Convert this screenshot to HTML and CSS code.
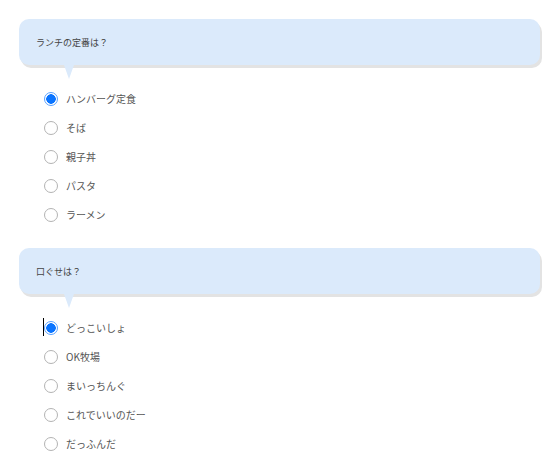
FILE: index.html
```html
<!DOCTYPE html>
<html lang="ja">
<head>
    <meta charset="UTF-8">
    <meta name="viewport" content="width=device-width, initial-scale=1.0">
    <title>アンケート</title>
    <link rel="stylesheet" href="styles.css">
</head>
<body>
    <form class="survey">
        <div class="question">
            <div class="bubble">ランチの定番は？</div>
            <div class="options">
                <label class="option"><input type="radio" name="lunch" value="hamburg" checked><span>ハンバーグ定食</span></label>
                <label class="option"><input type="radio" name="lunch" value="soba"><span>そば</span></label>
                <label class="option"><input type="radio" name="lunch" value="oyakodon"><span>親子丼</span></label>
                <label class="option"><input type="radio" name="lunch" value="pasta"><span>パスタ</span></label>
                <label class="option"><input type="radio" name="lunch" value="ramen"><span>ラーメン</span></label>
            </div>
        </div>
        <div class="question">
            <div class="bubble">口ぐせは？</div>
            <div class="options">
                <label class="option caret"><input type="radio" name="kuchiguse" value="1" checked><span>どっこいしょ</span></label>
                <label class="option"><input type="radio" name="kuchiguse" value="2"><span>OK牧場</span></label>
                <label class="option"><input type="radio" name="kuchiguse" value="3"><span>まいっちんぐ</span></label>
                <label class="option"><input type="radio" name="kuchiguse" value="4"><span>これでいいのだー</span></label>
                <label class="option"><input type="radio" name="kuchiguse" value="5"><span>だっふんだ</span></label>
            </div>
        </div>
    </form>
</body>
</html>
```

FILE: styles.css
```css
body {
    font-family: "Noto Sans CJK JP", "Noto Sans", sans-serif;
    background-color: #fff;
    margin: 0;
    padding: 0;
}
.survey {
    padding: 19px 17px 0 19px;
}
.question {
    margin-bottom: 19px;
}
.bubble {
    position: relative;
    height: 46px;
    display: flex;
    align-items: center;
    padding-left: 17px;
    background-color: #dbeafb;
    border-radius: 10px;
    box-shadow: 2px 3px 0 #e3e3e3;
    color: #444;
    font-size: 9px;
}
.bubble::after {
    content: "";
    position: absolute;
    left: 45px;
    top: 100%;
    border-left: 5px solid transparent;
    border-right: 5px solid transparent;
    border-top: 14px solid #dbeafb;
}
.options {
    margin-top: 19px;
    padding-left: 25px;
}
.option {
    position: relative;
    display: flex;
    align-items: center;
    gap: 8px;
    height: 29px;
    color: #555;
    font-size: 10px;
}
.option input {
    appearance: none;
    margin: 0;
    width: 14px;
    height: 14px;
    border: 1px solid #b3b3b3;
    border-radius: 50%;
    background-color: #fff;
    box-sizing: border-box;
}
.option input:checked {
    border-color: #5aa2ff;
    background: radial-gradient(circle, #0a74ff 0 4.5px, #fff 5px);
}
.caret::before {
    content: "";
    position: absolute;
    left: -1px;
    top: 5px;
    width: 1px;
    height: 18px;
    background-color: #000;
}
```
